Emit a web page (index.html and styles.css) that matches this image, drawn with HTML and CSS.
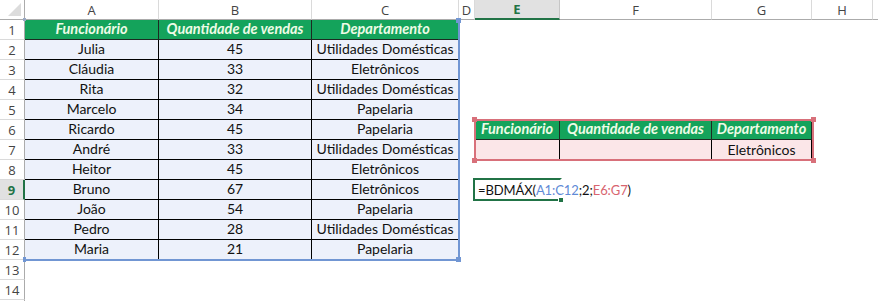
FILE: index.html
```html
<!DOCTYPE html>
<html lang="pt">
<head>
<meta charset="utf-8">
<title>BDMÁX</title>
<link rel="stylesheet" href="styles.css">
</head>
<body>
<div class="sheet">
  <div class="row hdr">
    <div class="corner"><span class="tri"></span></div>
    <div class="ch">A</div><div class="ch">B</div><div class="ch">C</div><div class="ch">D</div>
    <div class="ch sel">E</div><div class="ch">F</div><div class="ch">G</div><div class="ch">H</div><div class="ch last"></div>
  </div>
  <div class="row">
    <div class="rh">1</div>
    <div class="c th">Funcionário</div><div class="c th">Quantidade de vendas</div><div class="c th">Departamento</div>
    <div class="c"></div><div class="c"></div><div class="c"></div><div class="c"></div><div class="c"></div><div class="c"></div>
  </div>
  <div class="row">
    <div class="rh">2</div>
    <div class="c td">Julia</div><div class="c td">45</div><div class="c td">Utilidades Domésticas</div>
    <div class="c"></div><div class="c"></div><div class="c"></div><div class="c"></div><div class="c"></div><div class="c"></div>
  </div>
  <div class="row">
    <div class="rh">3</div>
    <div class="c td">Cláudia</div><div class="c td">33</div><div class="c td">Eletrônicos</div>
    <div class="c"></div><div class="c"></div><div class="c"></div><div class="c"></div><div class="c"></div><div class="c"></div>
  </div>
  <div class="row">
    <div class="rh">4</div>
    <div class="c td">Rita</div><div class="c td">32</div><div class="c td">Utilidades Domésticas</div>
    <div class="c"></div><div class="c"></div><div class="c"></div><div class="c"></div><div class="c"></div><div class="c"></div>
  </div>
  <div class="row">
    <div class="rh">5</div>
    <div class="c td">Marcelo</div><div class="c td">34</div><div class="c td">Papelaria</div>
    <div class="c"></div><div class="c"></div><div class="c"></div><div class="c"></div><div class="c"></div><div class="c"></div>
  </div>
  <div class="row">
    <div class="rh">6</div>
    <div class="c td">Ricardo</div><div class="c td">45</div><div class="c td">Papelaria</div>
    <div class="c"></div><div class="c th">Funcionário</div><div class="c th">Quantidade de vendas</div><div class="c th">Departamento</div><div class="c"></div><div class="c"></div>
  </div>
  <div class="row">
    <div class="rh">7</div>
    <div class="c td">André</div><div class="c td">33</div><div class="c td">Utilidades Domésticas</div>
    <div class="c"></div><div class="c pk"></div><div class="c pk"></div><div class="c pk">Eletrônicos</div><div class="c"></div><div class="c"></div>
  </div>
  <div class="row">
    <div class="rh">8</div>
    <div class="c td">Heitor</div><div class="c td">45</div><div class="c td">Eletrônicos</div>
    <div class="c"></div><div class="c"></div><div class="c"></div><div class="c"></div><div class="c"></div><div class="c"></div>
  </div>
  <div class="row">
    <div class="rh act">9</div>
    <div class="c td">Bruno</div><div class="c td">67</div><div class="c td">Eletrônicos</div>
    <div class="c"></div><div class="c fx">=BDMÁX(<span class="rb">A1:C12</span>;2;<span class="rr">E6:G7</span>)</div><div class="c"></div><div class="c"></div><div class="c"></div><div class="c"></div>
  </div>
  <div class="row">
    <div class="rh">10</div>
    <div class="c td">João</div><div class="c td">54</div><div class="c td">Papelaria</div>
    <div class="c"></div><div class="c"></div><div class="c"></div><div class="c"></div><div class="c"></div><div class="c"></div>
  </div>
  <div class="row">
    <div class="rh">11</div>
    <div class="c td">Pedro</div><div class="c td">28</div><div class="c td">Utilidades Domésticas</div>
    <div class="c"></div><div class="c"></div><div class="c"></div><div class="c"></div><div class="c"></div><div class="c"></div>
  </div>
  <div class="row">
    <div class="rh">12</div>
    <div class="c td">Maria</div><div class="c td">21</div><div class="c td">Papelaria</div>
    <div class="c"></div><div class="c"></div><div class="c"></div><div class="c"></div><div class="c"></div><div class="c"></div>
  </div>
  <div class="row">
    <div class="rh">13</div>
    <div class="c"></div><div class="c"></div><div class="c"></div><div class="c"></div><div class="c"></div><div class="c"></div><div class="c"></div><div class="c"></div><div class="c"></div>
  </div>
  <div class="row">
    <div class="rh">14</div>
    <div class="c"></div><div class="c"></div><div class="c"></div><div class="c"></div><div class="c"></div><div class="c"></div><div class="c"></div><div class="c"></div><div class="c"></div>
  </div>
  <div class="row">
    <div class="rh"></div>
  </div>

  <div class="range blue">
    <span class="h tl"></span><span class="h tr"></span><span class="h bl"></span><span class="h br"></span>
  </div>
  <div class="range red">
    <span class="h tl"></span><span class="h tr"></span><span class="h bl"></span><span class="h br"></span>
  </div>
  <div class="active"><span class="fill"></span></div>
</div>
</body>
</html>
```

FILE: styles.css
```css
* { box-sizing: border-box; }
body { margin: 0; background: #fff; font-family: "Lato", "Noto Sans", sans-serif; }
.sheet { position: relative; width: 878px; height: 301px; overflow: hidden; background: #fff; }
.row {
  display: grid;
  grid-template-columns: 25px 134px 153px 147px 16px 85px 152px 100px 61px 5px;
  height: 20px;
}
.corner {
  position: relative;
  border-right: 1px solid #ababab;
  border-bottom: 1px solid #ababab;
}
.tri {
  position: absolute;
  right: 3px;
  bottom: 3px;
  width: 0;
  height: 0;
  border-left: 13px solid transparent;
  border-bottom: 13px solid #dcdcdc;
}
.ch {
  display: flex;
  align-items: center;
  justify-content: center;
  font-family: "Open Sans", sans-serif;
  font-size: 13px;
  color: #444;
  border-right: 1px solid #dadada;
  border-bottom: 1px solid #ababab;
}
.ch.sel {
  background: #e1e1e1;
  color: #217346;
  font-weight: bold;
  border-bottom: 2px solid #217346;
  border-right-color: #c6c6c6;
}
.ch.last { border-right: none; }
.rh {
  display: flex;
  align-items: center;
  justify-content: center;
  font-family: "Open Sans", sans-serif;
  font-size: 13px;
  color: #444;
  border-right: 1px solid #ababab;
  border-bottom: 1px solid #dadada;
}
.rh.act {
  background: #e1e1e1;
  color: #217346;
  font-weight: bold;
  border-right: 2px solid #217346;
}
.c {
  display: flex;
  align-items: flex-end;
  justify-content: center;
  padding-bottom: 1px;
  font-size: 14px;
  line-height: 18px;
  color: #111;
  white-space: nowrap;
  overflow: visible;
}
.th {
  background: #14a35b;
  color: #eefbe6;
  font-size: 14.5px;
  font-weight: bold;
  font-style: italic;
  border-right: 1px solid #1d2a22;
  border-bottom: 1px solid #1d2a22;
}
.td {
  background: #edf1fb;
  border-right: 1px solid #000;
  border-bottom: 1px solid #000;
}
.pk {
  background: #fbe6e8;
  border-right: 1px solid #000;
}
.fx {
  justify-content: flex-start;
  padding-left: 3px;
  font-size: 13px;
  letter-spacing: -0.1px;
  position: relative;
  z-index: 2;
}
.rb { color: #5f8ad6; }
.rr { color: #d8646f; }

.range { position: absolute; pointer-events: none; }
.range.blue {
  left: 24px; top: 20px; width: 436px; height: 241px;
  border-right: 2px solid #7196d3;
  border-bottom: 2px solid #7196d3;
}
.range.red {
  left: 474px; top: 119px; width: 340px; height: 42px;
  border: 2px solid #d8707a;
}
.h { position: absolute; width: 5px; height: 5px; }
.blue .h { background: #7196d3; }
.red .h { background: #d8707a; }
.blue .tl { left: -1px; top: -2px; width: 3px; height: 3px; background: #9aa9c4; }
.blue .tr { right: -3px; top: -2px; }
.blue .bl { left: -1px; bottom: -3px; width: 3px; }
.blue .br { right: -3px; bottom: -3px; }
.red .tl { left: -4px; top: -4px; }
.red .tr { right: -4px; top: -4px; }
.red .bl { left: -4px; bottom: -4px; }
.red .br { right: -4px; bottom: -4px; }

.active {
  position: absolute;
  left: 473px; top: 178px; width: 89px; height: 23px;
  border: 2px solid #217346;
  border-right-color: transparent;
  pointer-events: none;
  z-index: 1;
}
.fill {
  position: absolute;
  right: -4px; bottom: -4px;
  width: 6px; height: 6px;
  background: #217346;
  border: 1px solid #fff;
}
```
